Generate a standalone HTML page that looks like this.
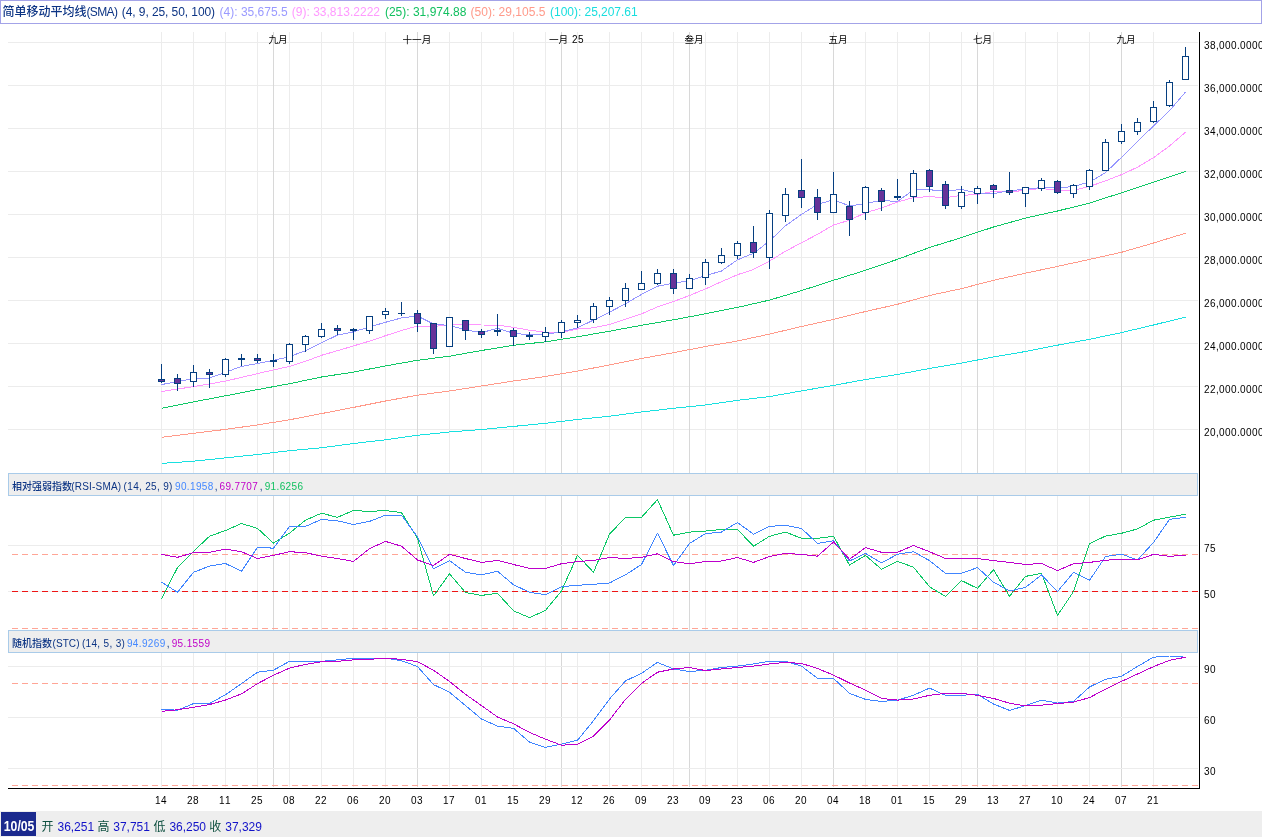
<!DOCTYPE html>
<html lang="zh"><head><meta charset="utf-8"><title>SMA Chart</title>
<style>
html,body{margin:0;padding:0;background:#fff;}
body{width:1262px;height:837px;overflow:hidden;position:relative;font-family:"Liberation Sans","Noto Sans CJK SC",sans-serif;}
svg{position:absolute;left:0;top:0;display:block;will-change:transform;}
text{font-family:"Liberation Sans","Noto Sans CJK SC",sans-serif;}
.g{stroke:#ececec;stroke-width:1;shape-rendering:crispEdges;}
.m{stroke:#d8d8d8;stroke-width:1;shape-rendering:crispEdges;}
.ax{stroke:#000;stroke-width:1;shape-rendering:crispEdges;}
.cw{stroke:#063f80;stroke-width:1;shape-rendering:crispEdges;}
.ch{stroke:#063f80;stroke-width:1;fill:#fff;shape-rendering:crispEdges;}
.cf{stroke:#063f80;stroke-width:1;fill:#663399;shape-rendering:crispEdges;}
.ln{fill:none;stroke-linejoin:round;stroke-linecap:butt;shape-rendering:crispEdges;}
.yl{font-size:10px;fill:#111;}
.hd{fill:#eeeeee;stroke:#a9cbe9;stroke-width:1;shape-rendering:crispEdges;}
</style></head><body>
<svg width="1262" height="837" viewBox="0 0 1262 837">
<rect x="0" y="0" width="1262" height="837" fill="#fff"/>

<rect x="0.5" y="0.5" width="1261" height="23" fill="#fff" stroke="#a3a3e8" stroke-width="1" shape-rendering="crispEdges"/>
<line class="g" x1="8" x2="1198" y1="42.5" y2="42.5"/>
<line class="g" x1="8" x2="1198" y1="85.5" y2="85.5"/>
<line class="g" x1="8" x2="1198" y1="128.5" y2="128.5"/>
<line class="g" x1="8" x2="1198" y1="171.5" y2="171.5"/>
<line class="g" x1="8" x2="1198" y1="214.5" y2="214.5"/>
<line class="g" x1="8" x2="1198" y1="257.5" y2="257.5"/>
<line class="g" x1="8" x2="1198" y1="300.5" y2="300.5"/>
<line class="g" x1="8" x2="1198" y1="343.5" y2="343.5"/>
<line class="g" x1="8" x2="1198" y1="386.5" y2="386.5"/>
<line class="g" x1="8" x2="1198" y1="429.5" y2="429.5"/>
<line class="g" x1="161.5" x2="161.5" y1="32" y2="787"/>
<line class="g" x1="193.5" x2="193.5" y1="32" y2="787"/>
<line class="g" x1="225.5" x2="225.5" y1="32" y2="787"/>
<line class="g" x1="257.5" x2="257.5" y1="32" y2="787"/>
<line class="g" x1="289.5" x2="289.5" y1="32" y2="787"/>
<line class="g" x1="321.5" x2="321.5" y1="32" y2="787"/>
<line class="g" x1="353.5" x2="353.5" y1="32" y2="787"/>
<line class="g" x1="385.5" x2="385.5" y1="32" y2="787"/>
<line class="g" x1="417.5" x2="417.5" y1="32" y2="787"/>
<line class="g" x1="449.5" x2="449.5" y1="32" y2="787"/>
<line class="g" x1="481.5" x2="481.5" y1="32" y2="787"/>
<line class="g" x1="513.5" x2="513.5" y1="32" y2="787"/>
<line class="g" x1="545.5" x2="545.5" y1="32" y2="787"/>
<line class="g" x1="577.5" x2="577.5" y1="32" y2="787"/>
<line class="g" x1="609.5" x2="609.5" y1="32" y2="787"/>
<line class="g" x1="641.5" x2="641.5" y1="32" y2="787"/>
<line class="g" x1="673.5" x2="673.5" y1="32" y2="787"/>
<line class="g" x1="705.5" x2="705.5" y1="32" y2="787"/>
<line class="g" x1="737.5" x2="737.5" y1="32" y2="787"/>
<line class="g" x1="769.5" x2="769.5" y1="32" y2="787"/>
<line class="g" x1="801.5" x2="801.5" y1="32" y2="787"/>
<line class="g" x1="833.5" x2="833.5" y1="32" y2="787"/>
<line class="g" x1="865.5" x2="865.5" y1="32" y2="787"/>
<line class="g" x1="897.5" x2="897.5" y1="32" y2="787"/>
<line class="g" x1="929.5" x2="929.5" y1="32" y2="787"/>
<line class="g" x1="961.5" x2="961.5" y1="32" y2="787"/>
<line class="g" x1="993.5" x2="993.5" y1="32" y2="787"/>
<line class="g" x1="1025.5" x2="1025.5" y1="32" y2="787"/>
<line class="g" x1="1057.5" x2="1057.5" y1="32" y2="787"/>
<line class="g" x1="1089.5" x2="1089.5" y1="32" y2="787"/>
<line class="g" x1="1121.5" x2="1121.5" y1="32" y2="787"/>
<line class="g" x1="1153.5" x2="1153.5" y1="32" y2="787"/>
<line class="m" x1="273.5" x2="273.5" y1="32" y2="787"/>
<line class="m" x1="417.5" x2="417.5" y1="32" y2="787"/>
<line class="m" x1="561.5" x2="561.5" y1="32" y2="787"/>
<line class="m" x1="689.5" x2="689.5" y1="32" y2="787"/>
<line class="m" x1="833.5" x2="833.5" y1="32" y2="787"/>
<line class="m" x1="977.5" x2="977.5" y1="32" y2="787"/>
<line class="m" x1="1121.5" x2="1121.5" y1="32" y2="787"/>
<line class="g" x1="8" x2="1198" y1="545.5" y2="545.5"/>
<line class="g" x1="8" x2="1198" y1="591.5" y2="591.5"/>
<line class="g" x1="8" x2="1198" y1="666.5" y2="666.5"/>
<line class="g" x1="8" x2="1198" y1="717.5" y2="717.5"/>
<line class="g" x1="8" x2="1198" y1="768.5" y2="768.5"/>
<polyline class="ln" points="161.5,463.4 193.5,461.2 225.5,457.9 257.5,454.5 289.5,450.7 321.5,447.8 353.5,443.5 385.5,439.8 417.5,435.3 449.5,432.0 481.5,429.5 513.5,426.4 545.5,423.3 577.5,419.5 609.5,416.2 641.5,412.0 673.5,408.3 705.5,405.0 737.5,400.3 769.5,396.6 801.5,390.9 833.5,385.4 865.5,379.5 897.5,374.5 929.5,368.5 961.5,363.1 993.5,356.9 1025.5,351.5 1057.5,345.2 1089.5,339.3 1121.5,332.6 1153.5,325.0 1185.5,317.1" stroke="#19e0e0" stroke-width="1" />
<polyline class="ln" points="161.5,437.3 193.5,433.3 225.5,429.4 257.5,424.9 289.5,419.8 321.5,413.6 353.5,407.4 385.5,401.0 417.5,395.2 449.5,391.0 481.5,386.0 513.5,381.0 545.5,376.5 577.5,371.1 609.5,364.9 641.5,358.5 673.5,352.7 705.5,346.5 737.5,341.0 769.5,334.1 801.5,326.5 833.5,319.4 865.5,311.5 897.5,304.3 929.5,295.5 961.5,288.6 993.5,280.3 1025.5,273.2 1057.5,266.4 1089.5,259.4 1121.5,252.3 1153.5,243.0 1185.5,233.2" stroke="#ff9a8a" stroke-width="1" />
<polyline class="ln" points="161.5,408.3 193.5,401.9 225.5,395.8 257.5,389.6 289.5,383.7 321.5,377.0 353.5,372.1 385.5,365.9 417.5,360.3 449.5,356.2 481.5,350.5 513.5,345.3 545.5,341.8 577.5,336.8 609.5,331.2 641.5,325.3 673.5,319.8 705.5,313.8 737.5,307.4 769.5,300.1 801.5,290.6 833.5,280.3 865.5,270.3 897.5,259.3 929.5,247.5 961.5,237.6 993.5,227.0 1025.5,218.1 1057.5,211.0 1089.5,203.1 1121.5,192.8 1153.5,182.3 1185.5,171.4" stroke="#10c866" stroke-width="1" />
<polyline class="ln" points="161.5,391.5 177.5,389.1 193.5,386.6 209.5,383.9 225.5,381.1 241.5,377.4 257.5,373.6 273.5,369.9 289.5,366.4 305.5,361.3 321.5,355.3 337.5,350.7 353.5,345.9 369.5,341.1 385.5,335.7 401.5,330.4 417.5,326.1 433.5,326.6 449.5,324.5 465.5,324.6 481.5,325.0 497.5,325.1 513.5,327.4 529.5,330.2 545.5,332.3 561.5,332.2 577.5,329.0 593.5,327.8 609.5,324.5 625.5,319.3 641.5,313.9 657.5,306.9 673.5,301.5 689.5,295.5 705.5,288.9 721.5,281.7 737.5,274.7 753.5,269.4 769.5,261.1 785.5,251.2 801.5,242.8 817.5,234.3 833.5,225.0 849.5,220.2 865.5,212.7 881.5,208.0 897.5,202.0 913.5,197.5 929.5,196.7 945.5,197.6 961.5,195.3 977.5,194.6 993.5,191.3 1009.5,191.9 1025.5,190.3 1041.5,188.4 1057.5,190.5 1073.5,190.4 1089.5,186.4 1105.5,180.9 1121.5,174.6 1137.5,167.2 1153.5,157.7 1169.5,146.0 1185.5,132.2" stroke="#ff96ff" stroke-width="1" />
<polyline class="ln" points="161.5,384.6 177.5,381.5 193.5,378.6 209.5,378.0 225.5,372.3 241.5,366.4 257.5,363.5 273.5,360.4 289.5,356.6 305.5,350.7 321.5,342.8 337.5,335.1 353.5,331.8 369.5,326.9 385.5,322.3 401.5,317.9 417.5,316.0 433.5,324.0 449.5,325.5 465.5,329.8 481.5,332.6 497.5,328.4 513.5,333.2 529.5,334.9 545.5,334.3 561.5,331.9 577.5,327.8 593.5,320.1 609.5,312.2 625.5,303.7 641.5,294.4 657.5,286.2 673.5,283.2 689.5,280.8 705.5,275.6 721.5,271.0 737.5,259.8 753.5,253.3 769.5,241.0 785.5,225.8 801.5,214.4 817.5,204.4 833.5,199.7 849.5,206.0 865.5,203.4 881.5,200.6 897.5,201.4 913.5,190.0 929.5,189.8 945.5,190.9 961.5,189.5 977.5,193.1 993.5,193.8 1009.5,190.6 1025.5,189.4 1041.5,187.4 1057.5,188.2 1073.5,186.4 1089.5,182.1 1105.5,172.6 1121.5,157.3 1137.5,141.6 1153.5,125.9 1169.5,110.8 1185.5,92.0" stroke="#9696ff" stroke-width="1" />
<line class="cw" x1="161.5" x2="161.5" y1="364" y2="383"/>
<rect class="cf" x="158.5" y="379.5" width="6" height="2"/>
<line class="cw" x1="177.5" x2="177.5" y1="374" y2="391"/>
<rect class="cf" x="174.5" y="378.5" width="6" height="5"/>
<line class="cw" x1="193.5" x2="193.5" y1="365" y2="387"/>
<rect class="ch" x="190.5" y="372.5" width="6" height="9"/>
<line class="cw" x1="209.5" x2="209.5" y1="369" y2="388"/>
<rect class="cf" x="206.5" y="372.5" width="6" height="2"/>
<line class="cw" x1="225.5" x2="225.5" y1="358" y2="377"/>
<rect class="ch" x="222.5" y="359.5" width="6" height="15"/>
<line class="cw" x1="241.5" x2="241.5" y1="354" y2="366"/>
<rect class="cf" x="238.5" y="358.5" width="6" height="1"/>
<line class="cw" x1="257.5" x2="257.5" y1="354" y2="363"/>
<rect class="cf" x="254.5" y="358.5" width="6" height="2"/>
<line class="cw" x1="273.5" x2="273.5" y1="354" y2="367"/>
<rect class="cf" x="270.5" y="360.5" width="6" height="1"/>
<line class="cw" x1="289.5" x2="289.5" y1="343" y2="364"/>
<rect class="ch" x="286.5" y="344.5" width="6" height="17"/>
<line class="cw" x1="305.5" x2="305.5" y1="335" y2="352"/>
<rect class="ch" x="302.5" y="336.5" width="6" height="8"/>
<line class="cw" x1="321.5" x2="321.5" y1="323" y2="338"/>
<rect class="ch" x="318.5" y="329.5" width="6" height="7"/>
<line class="cw" x1="337.5" x2="337.5" y1="325" y2="335"/>
<rect class="cf" x="334.5" y="328.5" width="6" height="2"/>
<line class="cw" x1="353.5" x2="353.5" y1="328" y2="340"/>
<rect class="cf" x="350.5" y="329.5" width="6" height="1"/>
<line class="cw" x1="369.5" x2="369.5" y1="316" y2="334"/>
<rect class="ch" x="366.5" y="316.5" width="6" height="14"/>
<line class="cw" x1="385.5" x2="385.5" y1="308" y2="319"/>
<rect class="ch" x="382.5" y="311.5" width="6" height="3"/>
<line class="cw" x1="401.5" x2="401.5" y1="302" y2="316"/>
<line class="cw" x1="398" x2="405" y1="313.5" y2="313.5"/>
<line class="cw" x1="417.5" x2="417.5" y1="310" y2="332"/>
<rect class="cf" x="414.5" y="313.5" width="6" height="10"/>
<line class="cw" x1="433.5" x2="433.5" y1="323" y2="354"/>
<rect class="cf" x="430.5" y="323.5" width="6" height="25"/>
<line class="cw" x1="449.5" x2="449.5" y1="317" y2="347"/>
<rect class="ch" x="446.5" y="317.5" width="6" height="29"/>
<line class="cw" x1="465.5" x2="465.5" y1="320" y2="340"/>
<rect class="cf" x="462.5" y="320.5" width="6" height="10"/>
<line class="cw" x1="481.5" x2="481.5" y1="329" y2="338"/>
<rect class="cf" x="478.5" y="331.5" width="6" height="3"/>
<line class="cw" x1="497.5" x2="497.5" y1="314" y2="336"/>
<rect class="cf" x="494.5" y="330.5" width="6" height="1"/>
<line class="cw" x1="513.5" x2="513.5" y1="328" y2="346"/>
<rect class="cf" x="510.5" y="330.5" width="6" height="6"/>
<line class="cw" x1="529.5" x2="529.5" y1="332" y2="340"/>
<rect class="cf" x="526.5" y="335.5" width="6" height="1"/>
<line class="cw" x1="545.5" x2="545.5" y1="327" y2="342"/>
<rect class="ch" x="542.5" y="332.5" width="6" height="4"/>
<line class="cw" x1="561.5" x2="561.5" y1="320" y2="338"/>
<rect class="ch" x="558.5" y="322.5" width="6" height="10"/>
<line class="cw" x1="577.5" x2="577.5" y1="315" y2="328"/>
<rect class="ch" x="574.5" y="320.5" width="6" height="2"/>
<line class="cw" x1="593.5" x2="593.5" y1="303" y2="323"/>
<rect class="ch" x="590.5" y="306.5" width="6" height="13"/>
<line class="cw" x1="609.5" x2="609.5" y1="297" y2="315"/>
<rect class="ch" x="606.5" y="300.5" width="6" height="6"/>
<line class="cw" x1="625.5" x2="625.5" y1="283" y2="307"/>
<rect class="ch" x="622.5" y="288.5" width="6" height="12"/>
<line class="cw" x1="641.5" x2="641.5" y1="271" y2="290"/>
<rect class="ch" x="638.5" y="283.5" width="6" height="6"/>
<line class="cw" x1="657.5" x2="657.5" y1="269" y2="285"/>
<rect class="ch" x="654.5" y="273.5" width="6" height="10"/>
<line class="cw" x1="673.5" x2="673.5" y1="269" y2="294"/>
<rect class="cf" x="670.5" y="273.5" width="6" height="15"/>
<line class="cw" x1="689.5" x2="689.5" y1="274" y2="289"/>
<rect class="ch" x="686.5" y="278.5" width="6" height="10"/>
<line class="cw" x1="705.5" x2="705.5" y1="259" y2="285"/>
<rect class="ch" x="702.5" y="262.5" width="6" height="15"/>
<line class="cw" x1="721.5" x2="721.5" y1="248" y2="264"/>
<rect class="ch" x="718.5" y="255.5" width="6" height="7"/>
<line class="cw" x1="737.5" x2="737.5" y1="241" y2="259"/>
<rect class="ch" x="734.5" y="243.5" width="6" height="12"/>
<line class="cw" x1="753.5" x2="753.5" y1="226" y2="258"/>
<rect class="cf" x="750.5" y="242.5" width="6" height="10"/>
<line class="cw" x1="769.5" x2="769.5" y1="210" y2="269"/>
<rect class="ch" x="766.5" y="213.5" width="6" height="44"/>
<line class="cw" x1="785.5" x2="785.5" y1="188" y2="222"/>
<rect class="ch" x="782.5" y="194.5" width="6" height="21"/>
<line class="cw" x1="801.5" x2="801.5" y1="159" y2="208"/>
<rect class="cf" x="798.5" y="190.5" width="6" height="7"/>
<line class="cw" x1="817.5" x2="817.5" y1="189" y2="220"/>
<rect class="cf" x="814.5" y="197.5" width="6" height="15"/>
<line class="cw" x1="833.5" x2="833.5" y1="172" y2="213"/>
<rect class="ch" x="830.5" y="194.5" width="6" height="18"/>
<line class="cw" x1="849.5" x2="849.5" y1="201" y2="236"/>
<rect class="cf" x="846.5" y="206.5" width="6" height="13"/>
<line class="cw" x1="865.5" x2="865.5" y1="186" y2="220"/>
<rect class="ch" x="862.5" y="187.5" width="6" height="25"/>
<line class="cw" x1="881.5" x2="881.5" y1="188" y2="211"/>
<rect class="cf" x="878.5" y="190.5" width="6" height="11"/>
<line class="cw" x1="897.5" x2="897.5" y1="179" y2="200"/>
<rect class="cf" x="894.5" y="196.5" width="6" height="1"/>
<line class="cw" x1="913.5" x2="913.5" y1="170" y2="202"/>
<rect class="ch" x="910.5" y="173.5" width="6" height="23"/>
<line class="cw" x1="929.5" x2="929.5" y1="169" y2="192"/>
<rect class="cf" x="926.5" y="170.5" width="6" height="16"/>
<line class="cw" x1="945.5" x2="945.5" y1="181" y2="209"/>
<rect class="cf" x="942.5" y="184.5" width="6" height="21"/>
<line class="cw" x1="961.5" x2="961.5" y1="186" y2="209"/>
<rect class="ch" x="958.5" y="192.5" width="6" height="14"/>
<line class="cw" x1="977.5" x2="977.5" y1="186" y2="204"/>
<rect class="ch" x="974.5" y="188.5" width="6" height="5"/>
<line class="cw" x1="993.5" x2="993.5" y1="184" y2="198"/>
<rect class="cf" x="990.5" y="185.5" width="6" height="4"/>
<line class="cw" x1="1009.5" x2="1009.5" y1="172" y2="195"/>
<rect class="cf" x="1006.5" y="190.5" width="6" height="2"/>
<line class="cw" x1="1025.5" x2="1025.5" y1="187" y2="207"/>
<rect class="ch" x="1022.5" y="187.5" width="6" height="6"/>
<line class="cw" x1="1041.5" x2="1041.5" y1="178" y2="191"/>
<rect class="ch" x="1038.5" y="180.5" width="6" height="8"/>
<line class="cw" x1="1057.5" x2="1057.5" y1="180" y2="194"/>
<rect class="cf" x="1054.5" y="181.5" width="6" height="11"/>
<line class="cw" x1="1073.5" x2="1073.5" y1="184" y2="198"/>
<rect class="ch" x="1070.5" y="185.5" width="6" height="8"/>
<line class="cw" x1="1089.5" x2="1089.5" y1="169" y2="190"/>
<rect class="ch" x="1086.5" y="170.5" width="6" height="16"/>
<line class="cw" x1="1105.5" x2="1105.5" y1="139" y2="171"/>
<rect class="ch" x="1102.5" y="142.5" width="6" height="28"/>
<line class="cw" x1="1121.5" x2="1121.5" y1="124" y2="144"/>
<rect class="ch" x="1118.5" y="131.5" width="6" height="10"/>
<line class="cw" x1="1137.5" x2="1137.5" y1="118" y2="135"/>
<rect class="ch" x="1134.5" y="122.5" width="6" height="9"/>
<line class="cw" x1="1153.5" x2="1153.5" y1="101" y2="123"/>
<rect class="ch" x="1150.5" y="107.5" width="6" height="14"/>
<line class="cw" x1="1169.5" x2="1169.5" y1="80" y2="107"/>
<rect class="ch" x="1166.5" y="82.5" width="6" height="23"/>
<line class="cw" x1="1185.5" x2="1185.5" y1="47" y2="80"/>
<rect class="ch" x="1182.5" y="56.5" width="6" height="23"/>
<line x1="12" x2="1198" y1="554.5" y2="554.5" stroke="#ffa596" stroke-width="1" stroke-dasharray="6 4" shape-rendering="crispEdges"/>
<line x1="12" x2="1198" y1="591.5" y2="591.5" stroke="#ee1414" stroke-width="1" stroke-dasharray="6 4" shape-rendering="crispEdges"/>
<line x1="12" x2="1198" y1="628.5" y2="628.5" stroke="#ffa596" stroke-width="1" stroke-dasharray="6 4" shape-rendering="crispEdges"/>
<line x1="12" x2="1198" y1="683.5" y2="683.5" stroke="#ffa596" stroke-width="1" stroke-dasharray="6 4" shape-rendering="crispEdges"/>
<line x1="12" x2="1198" y1="785.5" y2="785.5" stroke="#ffa596" stroke-width="1" stroke-dasharray="6 4" shape-rendering="crispEdges"/>
<polyline class="ln" points="161.5,598.7 177.5,567.6 193.5,551.3 209.5,536.3 225.5,530.5 241.5,523.5 257.5,528.4 273.5,543.1 289.5,533.2 305.5,520.2 321.5,513.2 337.5,517.3 353.5,510.5 369.5,511.5 385.5,510.5 401.5,512.6 417.5,538.3 433.5,596.0 449.5,573.8 465.5,592.5 481.5,595.4 497.5,593.3 513.5,610.8 529.5,617.6 545.5,610.4 561.5,590.9 577.5,555.2 593.5,572.3 609.5,534.2 625.5,517.3 641.5,517.3 657.5,499.6 673.5,535.2 689.5,532.1 705.5,531.1 721.5,529.5 737.5,529.5 753.5,546.2 769.5,536.3 785.5,532.1 801.5,538.3 817.5,538.3 833.5,536.3 849.5,565.1 865.5,555.4 881.5,569.2 897.5,561.4 913.5,567.2 929.5,586.7 945.5,596.4 961.5,580.6 977.5,588.4 993.5,569.6 1009.5,596.4 1025.5,576.4 1041.5,573.3 1057.5,615.4 1073.5,591.6 1089.5,543.6 1105.5,536.1 1121.5,533.3 1137.5,528.9 1153.5,520.2 1169.5,517.1 1185.5,514.3" stroke="#0cc866" stroke-width="1" />
<polyline class="ln" points="161.5,582.2 177.5,592.3 193.5,572.3 209.5,566.1 225.5,563.5 241.5,571.3 257.5,547.2 273.5,548.2 289.5,526.4 305.5,526.4 321.5,519.4 337.5,520.8 353.5,524.5 369.5,521.4 385.5,515.2 401.5,515.2 417.5,536.9 433.5,568.8 449.5,560.6 465.5,572.3 481.5,574.8 497.5,571.3 513.5,584.7 529.5,592.3 545.5,594.6 561.5,586.7 577.5,585.3 593.5,584.3 609.5,583.0 625.5,574.8 641.5,564.5 657.5,533.2 673.5,565.5 689.5,543.5 705.5,533.6 721.5,532.1 737.5,522.5 753.5,534.2 769.5,526.4 785.5,525.3 801.5,528.4 817.5,543.5 833.5,540.8 849.5,561.0 865.5,553.4 881.5,563.0 897.5,554.2 913.5,551.7 929.5,560.6 945.5,573.3 961.5,573.3 977.5,567.6 993.5,582.2 1009.5,590.9 1025.5,587.4 1041.5,575.0 1057.5,591.5 1073.5,572.4 1089.5,580.4 1105.5,556.6 1121.5,554.1 1137.5,560.0 1153.5,542.5 1169.5,519.3 1185.5,517.3" stroke="#4085ff" stroke-width="1" />
<polyline class="ln" points="161.5,554.4 177.5,557.3 193.5,552.7 209.5,552.3 225.5,549.2 241.5,551.7 257.5,558.5 273.5,555.4 289.5,551.7 305.5,552.7 321.5,556.2 337.5,558.5 353.5,561.4 369.5,548.6 385.5,541.4 401.5,546.2 417.5,560.0 433.5,565.5 449.5,554.4 465.5,558.5 481.5,562.4 497.5,560.4 513.5,564.5 529.5,568.4 545.5,568.4 561.5,563.7 577.5,561.6 593.5,560.4 609.5,557.5 625.5,558.5 641.5,557.3 657.5,553.8 673.5,561.6 689.5,563.7 705.5,561.6 721.5,561.0 737.5,557.5 753.5,562.4 769.5,556.5 785.5,553.4 801.5,554.4 817.5,556.2 833.5,542.0 849.5,559.3 865.5,547.6 881.5,552.3 897.5,552.3 913.5,545.5 929.5,551.7 945.5,558.5 961.5,558.5 977.5,558.5 993.5,560.6 1009.5,562.4 1025.5,564.5 1041.5,563.5 1057.5,570.6 1073.5,563.7 1089.5,562.4 1105.5,560.3 1121.5,559.1 1137.5,560.0 1153.5,554.3 1169.5,556.3 1185.5,555.3" stroke="#bd00cc" stroke-width="1" />
<polyline class="ln" points="161.5,709.3 177.5,710.2 193.5,703.6 209.5,703.6 225.5,694.7 241.5,683.6 257.5,672.2 273.5,670.2 289.5,661.3 305.5,661.3 321.5,661.3 337.5,659.9 353.5,658.2 369.5,658.2 385.5,658.2 401.5,660.7 417.5,666.5 433.5,684.6 449.5,692.2 465.5,705.6 481.5,719.0 497.5,726.2 513.5,728.3 529.5,742.1 545.5,747.4 561.5,744.1 577.5,740.2 593.5,720.7 609.5,699.0 625.5,680.9 641.5,673.3 657.5,662.4 673.5,669.0 689.5,671.6 705.5,670.2 721.5,667.5 737.5,666.1 753.5,664.0 769.5,661.3 785.5,661.3 801.5,666.1 817.5,678.4 833.5,678.4 849.5,693.3 865.5,699.4 881.5,701.5 897.5,700.1 913.5,695.3 929.5,688.1 945.5,695.3 961.5,695.3 977.5,694.3 993.5,704.0 1009.5,710.4 1025.5,705.6 1041.5,700.1 1057.5,703.1 1073.5,701.4 1089.5,687.0 1105.5,679.2 1121.5,676.3 1137.5,666.4 1153.5,657.2 1169.5,656.0 1185.5,657.2" stroke="#4085ff" stroke-width="1" />
<polyline class="ln" points="161.5,711.4 177.5,709.7 193.5,707.3 209.5,704.6 225.5,700.0 241.5,693.9 257.5,683.6 273.5,675.3 289.5,668.1 305.5,664.4 321.5,661.7 337.5,661.3 353.5,659.9 369.5,659.3 385.5,658.2 401.5,659.3 417.5,661.7 433.5,670.2 449.5,681.5 465.5,694.3 481.5,705.6 497.5,717.0 513.5,723.8 529.5,732.4 545.5,739.2 561.5,745.2 577.5,744.4 593.5,736.1 609.5,720.0 625.5,699.4 641.5,683.4 657.5,672.2 673.5,669.0 689.5,667.5 705.5,670.6 721.5,669.0 737.5,667.5 753.5,666.1 769.5,664.0 785.5,662.4 801.5,663.4 817.5,668.5 833.5,675.1 849.5,683.0 865.5,690.2 881.5,698.4 897.5,700.1 913.5,699.0 929.5,695.3 945.5,693.3 961.5,693.3 977.5,695.3 993.5,698.4 1009.5,703.2 1025.5,706.0 1041.5,705.2 1057.5,703.6 1073.5,702.1 1089.5,697.6 1105.5,689.2 1121.5,681.4 1137.5,674.0 1153.5,666.6 1169.5,660.4 1185.5,657.2" stroke="#bd00cc" stroke-width="1" />
<rect class="hd" x="8.5" y="473.5" width="1189" height="22"/>
<rect class="hd" x="8.5" y="630.5" width="1189" height="22"/>
<line class="ax" x1="1199.5" x2="1199.5" y1="32" y2="789"/>
<line class="ax" x1="8" x2="1200" y1="788.5" y2="788.5"/>
<rect x="0" y="811" width="1262" height="26" fill="#eeeeee"/>
<rect x="1" y="812" width="35" height="24" fill="#1b2a8e"/>
<text x="1204" y="49" font-size="10" fill="#000" style="white-space:pre" textLength="59.5" lengthAdjust="spacing">38,000.0000</text>
<text x="1204" y="92" font-size="10" fill="#000" style="white-space:pre" textLength="59.5" lengthAdjust="spacing">36,000.0000</text>
<text x="1204" y="135" font-size="10" fill="#000" style="white-space:pre" textLength="59.5" lengthAdjust="spacing">34,000.0000</text>
<text x="1204" y="178" font-size="10" fill="#000" style="white-space:pre" textLength="59.5" lengthAdjust="spacing">32,000.0000</text>
<text x="1204" y="221" font-size="10" fill="#000" style="white-space:pre" textLength="59.5" lengthAdjust="spacing">30,000.0000</text>
<text x="1204" y="264" font-size="10" fill="#000" style="white-space:pre" textLength="59.5" lengthAdjust="spacing">28,000.0000</text>
<text x="1204" y="307" font-size="10" fill="#000" style="white-space:pre" textLength="59.5" lengthAdjust="spacing">26,000.0000</text>
<text x="1204" y="350" font-size="10" fill="#000" style="white-space:pre" textLength="59.5" lengthAdjust="spacing">24,000.0000</text>
<text x="1204" y="393" font-size="10" fill="#000" style="white-space:pre" textLength="59.5" lengthAdjust="spacing">22,000.0000</text>
<text x="1204" y="436" font-size="10" fill="#000" style="white-space:pre" textLength="59.5" lengthAdjust="spacing">20,000.0000</text>
<text x="1204" y="552" font-size="10" fill="#000" style="white-space:pre" textLength="11.6" lengthAdjust="spacing">75</text>
<text x="1204" y="598" font-size="10" fill="#000" style="white-space:pre" textLength="11.6" lengthAdjust="spacing">50</text>
<text x="1204" y="673" font-size="10" fill="#000" style="white-space:pre" textLength="11.6" lengthAdjust="spacing">90</text>
<text x="1204" y="724" font-size="10" fill="#000" style="white-space:pre" textLength="11.6" lengthAdjust="spacing">60</text>
<text x="1204" y="775" font-size="10" fill="#000" style="white-space:pre" textLength="11.6" lengthAdjust="spacing">30</text>
<text x="155.0" y="804" font-size="10" fill="#000" style="white-space:pre" textLength="11.6" lengthAdjust="spacing">14</text>
<text x="187.0" y="804" font-size="10" fill="#000" style="white-space:pre" textLength="11.6" lengthAdjust="spacing">28</text>
<text x="219.0" y="804" font-size="10" fill="#000" style="white-space:pre" textLength="11.6" lengthAdjust="spacing">11</text>
<text x="251.0" y="804" font-size="10" fill="#000" style="white-space:pre" textLength="11.6" lengthAdjust="spacing">25</text>
<text x="283.0" y="804" font-size="10" fill="#000" style="white-space:pre" textLength="11.6" lengthAdjust="spacing">08</text>
<text x="315.0" y="804" font-size="10" fill="#000" style="white-space:pre" textLength="11.6" lengthAdjust="spacing">22</text>
<text x="347.0" y="804" font-size="10" fill="#000" style="white-space:pre" textLength="11.6" lengthAdjust="spacing">06</text>
<text x="379.0" y="804" font-size="10" fill="#000" style="white-space:pre" textLength="11.6" lengthAdjust="spacing">20</text>
<text x="411.0" y="804" font-size="10" fill="#000" style="white-space:pre" textLength="11.6" lengthAdjust="spacing">03</text>
<text x="443.0" y="804" font-size="10" fill="#000" style="white-space:pre" textLength="11.6" lengthAdjust="spacing">17</text>
<text x="475.0" y="804" font-size="10" fill="#000" style="white-space:pre" textLength="11.6" lengthAdjust="spacing">01</text>
<text x="507.0" y="804" font-size="10" fill="#000" style="white-space:pre" textLength="11.6" lengthAdjust="spacing">15</text>
<text x="539.0" y="804" font-size="10" fill="#000" style="white-space:pre" textLength="11.6" lengthAdjust="spacing">29</text>
<text x="571.0" y="804" font-size="10" fill="#000" style="white-space:pre" textLength="11.6" lengthAdjust="spacing">12</text>
<text x="603.0" y="804" font-size="10" fill="#000" style="white-space:pre" textLength="11.6" lengthAdjust="spacing">26</text>
<text x="635.0" y="804" font-size="10" fill="#000" style="white-space:pre" textLength="11.6" lengthAdjust="spacing">09</text>
<text x="667.0" y="804" font-size="10" fill="#000" style="white-space:pre" textLength="11.6" lengthAdjust="spacing">23</text>
<text x="699.0" y="804" font-size="10" fill="#000" style="white-space:pre" textLength="11.6" lengthAdjust="spacing">09</text>
<text x="731.0" y="804" font-size="10" fill="#000" style="white-space:pre" textLength="11.6" lengthAdjust="spacing">23</text>
<text x="763.0" y="804" font-size="10" fill="#000" style="white-space:pre" textLength="11.6" lengthAdjust="spacing">06</text>
<text x="795.0" y="804" font-size="10" fill="#000" style="white-space:pre" textLength="11.6" lengthAdjust="spacing">20</text>
<text x="827.0" y="804" font-size="10" fill="#000" style="white-space:pre" textLength="11.6" lengthAdjust="spacing">04</text>
<text x="859.0" y="804" font-size="10" fill="#000" style="white-space:pre" textLength="11.6" lengthAdjust="spacing">18</text>
<text x="891.0" y="804" font-size="10" fill="#000" style="white-space:pre" textLength="11.6" lengthAdjust="spacing">01</text>
<text x="923.0" y="804" font-size="10" fill="#000" style="white-space:pre" textLength="11.6" lengthAdjust="spacing">15</text>
<text x="955.0" y="804" font-size="10" fill="#000" style="white-space:pre" textLength="11.6" lengthAdjust="spacing">29</text>
<text x="987.0" y="804" font-size="10" fill="#000" style="white-space:pre" textLength="11.6" lengthAdjust="spacing">13</text>
<text x="1019.0" y="804" font-size="10" fill="#000" style="white-space:pre" textLength="11.6" lengthAdjust="spacing">27</text>
<text x="1051.0" y="804" font-size="10" fill="#000" style="white-space:pre" textLength="11.6" lengthAdjust="spacing">10</text>
<text x="1083.0" y="804" font-size="10" fill="#000" style="white-space:pre" textLength="11.6" lengthAdjust="spacing">24</text>
<text x="1115.0" y="804" font-size="10" fill="#000" style="white-space:pre" textLength="11.6" lengthAdjust="spacing">07</text>
<text x="1147.0" y="804" font-size="10" fill="#000" style="white-space:pre" textLength="11.6" lengthAdjust="spacing">21</text>
<text x="268.5" y="42.6" font-size="9.6" fill="#000" style="white-space:pre">九月</text>
<text x="402.5" y="42.6" font-size="9.6" fill="#000" style="white-space:pre">十一月</text>
<text x="549" y="42.6" font-size="9.6" fill="#000" style="white-space:pre">一月</text>
<text x="572" y="43" font-size="10" fill="#000" style="white-space:pre" textLength="11.6" lengthAdjust="spacing">25</text>
<text x="684.5" y="42.6" font-size="9.6" fill="#000" style="white-space:pre">叁月</text>
<text x="828.5" y="42.6" font-size="9.6" fill="#000" style="white-space:pre">五月</text>
<text x="973" y="42.6" font-size="9.6" fill="#000" style="white-space:pre">七月</text>
<text x="1116.5" y="42.6" font-size="9.6" fill="#000" style="white-space:pre">九月</text>
<text x="2.5" y="15.9" font-size="12" fill="#0c3484" style="white-space:pre" font-weight="500">简单移动平均线</text>
<text x="86.4" y="15.9" font-size="12" fill="#0c3484" style="white-space:pre" textLength="31.6" lengthAdjust="spacing">(SMA)</text>
<text x="121.8" y="15.9" font-size="12" fill="#0c3484" style="white-space:pre" textLength="93.3" lengthAdjust="spacing">(4, 9, 25, 50, 100)</text>
<text x="219.6" y="15.9" font-size="12" fill="#9a9aff" style="white-space:pre" textLength="68" lengthAdjust="spacing">(4): 35,675.5</text>
<text x="291.8" y="15.9" font-size="12" fill="#ff9aff" style="white-space:pre" textLength="88.2" lengthAdjust="spacing">(9): 33,813.2222</text>
<text x="384.9" y="15.9" font-size="12" fill="#12c060" style="white-space:pre" textLength="81.5" lengthAdjust="spacing">(25): 31,974.88</text>
<text x="470.5" y="15.9" font-size="12" fill="#ff9a8a" style="white-space:pre" textLength="75" lengthAdjust="spacing">(50): 29,105.5</text>
<text x="550.1" y="15.9" font-size="12" fill="#19dede" style="white-space:pre" textLength="87.5" lengthAdjust="spacing">(100): 25,207.61</text>
<text x="12" y="490" font-size="10" fill="#0c3484" style="white-space:pre" font-weight="500">相对强弱指数</text>
<text x="71.2" y="490" font-size="10" fill="#0c3484" style="white-space:pre" textLength="50" lengthAdjust="spacing">(RSI-SMA)</text>
<text x="123.6" y="490" font-size="10" fill="#0c3484" style="white-space:pre" textLength="48.8" lengthAdjust="spacing">(14, 25, 9)</text>
<text x="175" y="490" font-size="10" fill="#4488ff" style="white-space:pre" textLength="38.3" lengthAdjust="spacing">90.1958</text>
<text x="214.7" y="490" font-size="10" fill="#0c3484" style="white-space:pre">,</text>
<text x="219.5" y="490" font-size="10" fill="#c000c8" style="white-space:pre" textLength="38.3" lengthAdjust="spacing">69.7707</text>
<text x="259.7" y="490" font-size="10" fill="#0c3484" style="white-space:pre">,</text>
<text x="264.7" y="490" font-size="10" fill="#12c060" style="white-space:pre" textLength="38.3" lengthAdjust="spacing">91.6256</text>
<text x="12" y="647" font-size="10" fill="#0c3484" style="white-space:pre" font-weight="500">随机指数</text>
<text x="52.5" y="647" font-size="10" fill="#0c3484" style="white-space:pre" textLength="27" lengthAdjust="spacing">(STC)</text>
<text x="81.9" y="647" font-size="10" fill="#0c3484" style="white-space:pre" textLength="43" lengthAdjust="spacing">(14, 5, 3)</text>
<text x="126.9" y="647" font-size="10" fill="#4488ff" style="white-space:pre" textLength="38.3" lengthAdjust="spacing">94.9269</text>
<text x="166.8" y="647" font-size="10" fill="#0c3484" style="white-space:pre">,</text>
<text x="171.7" y="647" font-size="10" fill="#c000c8" style="white-space:pre" textLength="38.3" lengthAdjust="spacing">95.1559</text>
<text x="3.8" y="831" font-size="14.8" font-weight="bold" fill="#fff" textLength="30.6" lengthAdjust="spacingAndGlyphs">10/05</text>
<text x="41.5" y="830.5" font-size="12" fill="#0f5040" style="white-space:pre">开</text>
<text x="57.5" y="830.5" font-size="12" fill="#1212c8" style="white-space:pre" textLength="36.6" lengthAdjust="spacing">36,251</text>
<text x="97.5" y="830.5" font-size="12" fill="#0f5040" style="white-space:pre">高</text>
<text x="113.3" y="830.5" font-size="12" fill="#1212c8" style="white-space:pre" textLength="36.6" lengthAdjust="spacing">37,751</text>
<text x="153.5" y="830.5" font-size="12" fill="#0f5040" style="white-space:pre">低</text>
<text x="169.4" y="830.5" font-size="12" fill="#1212c8" style="white-space:pre" textLength="36.6" lengthAdjust="spacing">36,250</text>
<text x="209.2" y="830.5" font-size="12" fill="#0f5040" style="white-space:pre">收</text>
<text x="225.3" y="830.5" font-size="12" fill="#1212c8" style="white-space:pre" textLength="36.6" lengthAdjust="spacing">37,329</text>
</svg></body></html>
